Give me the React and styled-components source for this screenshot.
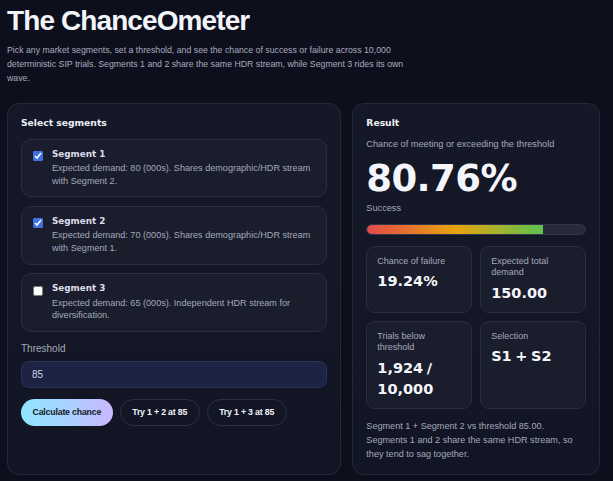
import React, { useState } from "react";
import styled, { createGlobalStyle } from "styled-components";

const GlobalStyle = createGlobalStyle`
  html, body {
    margin: 0;
    padding: 0;
    background: #0d0f1d;
  }
  body {
    font-family: "Liberation Sans", Arial, sans-serif;
    color: #e9ebf3;
  }
`;

const SEGMENTS = [
  {
    id: 1,
    name: "Segment 1",
    text: "Expected demand: 80 (000s). Shares demographic/HDR stream with Segment 2.",
  },
  {
    id: 2,
    name: "Segment 2",
    text: "Expected demand: 70 (000s). Shares demographic/HDR stream with Segment 1.",
  },
  {
    id: 3,
    name: "Segment 3",
    text: "Expected demand: 65 (000s). Independent HDR stream for diversification.",
  },
];

const RESULT = {
  success: 80.76,
  failure: "19.24%",
  expected: "150.00",
  below: "1,924 / 10,000",
  selection: "S1 + S2",
  note:
    "Segment 1 + Segment 2 vs threshold 85.00. Segments 1 and 2 share the same HDR stream, so they tend to sag together.",
};

const App = () => {
  const [picked, setPicked] = useState({ 1: true, 2: true, 3: false });
  const [threshold, setThreshold] = useState("85");

  const toggle = (id) => setPicked({ ...picked, [id]: !picked[id] });

  return (
    <Page>
      <GlobalStyle />
      <Title>The ChanceOmeter</Title>
      <Intro>
        Pick any market segments, set a threshold, and see the chance of
        success or failure across 10,000 deterministic SIP trials. Segments 1
        and 2 share the same HDR stream, while Segment 3 rides its own wave.
      </Intro>

      <Columns>
        <Panel>
          <PanelTitle>Select segments</PanelTitle>
          <SegmentList>
            {SEGMENTS.map((s) => (
              <SegmentCard key={s.id}>
                <Check
                  type="checkbox"
                  checked={picked[s.id]}
                  onChange={() => toggle(s.id)}
                />
                <SegmentBody>
                  <SegmentName>{s.name}</SegmentName>
                  <SegmentText>{s.text}</SegmentText>
                </SegmentBody>
              </SegmentCard>
            ))}
          </SegmentList>

          <FieldLabel>Threshold</FieldLabel>
          <Input
            value={threshold}
            onChange={(e) => setThreshold(e.target.value)}
          />

          <ButtonRow>
            <PrimaryButton>Calculate chance</PrimaryButton>
            <GhostButton>Try 1 + 2 at 85</GhostButton>
            <GhostButton>Try 1 + 3 at 85</GhostButton>
          </ButtonRow>
        </Panel>

        <Panel>
          <PanelTitle>Result</PanelTitle>
          <Caption>Chance of meeting or exceeding the threshold</Caption>
          <BigNumber>{RESULT.success.toFixed(2)}%</BigNumber>
          <Status>Success</Status>
          <Track>
            <Fill style={{ width: `${RESULT.success}%` }} />
          </Track>

          <StatGrid>
            <StatCard>
              <StatLabel>Chance of failure</StatLabel>
              <StatValue>{RESULT.failure}</StatValue>
            </StatCard>
            <StatCard>
              <StatLabel>Expected total demand</StatLabel>
              <StatValue>{RESULT.expected}</StatValue>
            </StatCard>
            <StatCard>
              <StatLabel>Trials below threshold</StatLabel>
              <StatValue>{RESULT.below}</StatValue>
            </StatCard>
            <StatCard>
              <StatLabel>Selection</StatLabel>
              <StatValue>{RESULT.selection}</StatValue>
            </StatCard>
          </StatGrid>

          <Note>{RESULT.note}</Note>
        </Panel>
      </Columns>
    </Page>
  );
};

const Page = styled.div`
  padding: 4px 13px 6px 7px;
`;

const Title = styled.h1`
  margin: 0;
  font-family: "Liberation Sans", Arial, sans-serif;
  font-size: 28px;
  line-height: 34px;
  font-weight: 700;
  letter-spacing: -0.9px;
  color: #f3f4f9;
`;

const Intro = styled.p`
  margin: 5px 0 0;
  max-width: 402px;
  font-size: 8.75px;
  line-height: 14.2px;
  color: #a9adbf;
`;

const Columns = styled.div`
  display: grid;
  grid-template-columns: 1.35fr 1fr;
  gap: 11px;
  margin-top: 17px;
`;

const Panel = styled.section`
  display: flex;
  flex-direction: column;
  padding: 13px;
  background: linear-gradient(180deg, #151827 0%, #121523 100%);
  border: 1px solid #252939;
  border-radius: 12px;
`;

const PanelTitle = styled.h2`
  margin: 0;
  font-family: "DejaVu Sans", sans-serif;
  font-size: 9.2px;
  line-height: 12px;
  font-weight: 700;
  color: #eef0f6;
`;

const SegmentList = styled.div`
  display: flex;
  flex-direction: column;
  gap: 8.5px;
  margin-top: 10px;
`;

const SegmentCard = styled.label`
  display: flex;
  align-items: flex-start;
  gap: 9px;
  padding: 9px 11px 9.5px;
  background: #1a1d2c;
  border: 1px solid #2a2e3e;
  border-radius: 10px;
`;

const Check = styled.input`
  flex: none;
  width: 10px;
  height: 10px;
  margin: 2.5px 0 0 0;
  accent-color: #3d72e6;
`;

const SegmentBody = styled.div`
  display: flex;
  flex-direction: column;
  gap: 2.5px;
`;

const SegmentName = styled.div`
  font-family: "DejaVu Sans", sans-serif;
  font-size: 8.8px;
  line-height: 11px;
  font-weight: 700;
  color: #dcdfea;
`;

const SegmentText = styled.div`
  font-size: 9.1px;
  line-height: 12.4px;
  color: #a4a9bb;
`;

const FieldLabel = styled.div`
  margin-top: 10px;
  font-size: 10px;
  line-height: 13px;
  color: #a4a9bb;
`;

const Input = styled.input`
  box-sizing: border-box;
  margin-top: 5.5px;
  height: 27px;
  width: 100%;
  padding: 0 10px;
  font-family: "Liberation Sans", Arial, sans-serif;
  font-size: 10px;
  color: #cdd1e4;
  background: #1d2342;
  border: 1px solid #2b3256;
  border-radius: 8px;
  outline: none;
`;

const ButtonRow = styled.div`
  display: flex;
  gap: 7px;
  margin-top: 11px;
`;

const BaseButton = styled.button`
  height: 27px;
  padding: 0 11.5px;
  font-family: "Liberation Sans", Arial, sans-serif;
  font-size: 8.8px;
  font-weight: 700;
  letter-spacing: -0.2px;
  border-radius: 14px;
  cursor: pointer;
`;

const PrimaryButton = styled(BaseButton)`
  color: #151827;
  background: linear-gradient(90deg, #8fe6ff 0%, #a9d2ff 50%, #cbb6ff 100%);
  border: none;
`;

const GhostButton = styled(BaseButton)`
  color: #f1f2f7;
  background: transparent;
  border: 1px solid #2c3043;
`;

const Caption = styled.div`
  margin-top: 9.5px;
  font-size: 9.2px;
  line-height: 12px;
  color: #a4a9bb;
`;

const BigNumber = styled.div`
  margin-top: 8.5px;
  font-family: "DejaVu Sans", sans-serif;
  font-size: 37px;
  line-height: 40px;
  font-weight: 700;
  letter-spacing: -0.6px;
  color: #f5f6fb;
`;

const Status = styled.div`
  margin-top: 3.5px;
  font-size: 9.2px;
  line-height: 12px;
  color: #a4a9bb;
`;

const Track = styled.div`
  box-sizing: border-box;
  margin-top: 10px;
  height: 11px;
  background: #262a3a;
  border: 1px solid #30354a;
  border-radius: 6px;
  overflow: hidden;
`;

const Fill = styled.div`
  height: 100%;
  border-radius: 6px 0 0 6px;
  background: linear-gradient(90deg, #e2494c 0%, #e9a20f 50%, #5cc24f 100%);
`;

const StatGrid = styled.div`
  display: grid;
  grid-template-columns: 1fr 1fr;
  gap: 8px;
  margin-top: 11px;
`;

const StatCard = styled.div`
  padding: 9px 10px 8px;
  background: #1a1d2b;
  border: 1px solid #292d3d;
  border-radius: 9px;
`;

const StatLabel = styled.div`
  font-size: 9px;
  line-height: 11.3px;
  color: #a4a9bb;
`;

const StatValue = styled.div`
  margin-top: 4px;
  font-family: "DejaVu Sans", sans-serif;
  font-size: 14.5px;
  line-height: 21.3px;
  font-weight: 700;
  word-spacing: -1.5px;
  color: #f5f6fb;
`;

const Note = styled.p`
  margin: 11px 0 0;
  font-size: 9.1px;
  line-height: 13.7px;
  color: #a4a9bb;
`;

export default App;
